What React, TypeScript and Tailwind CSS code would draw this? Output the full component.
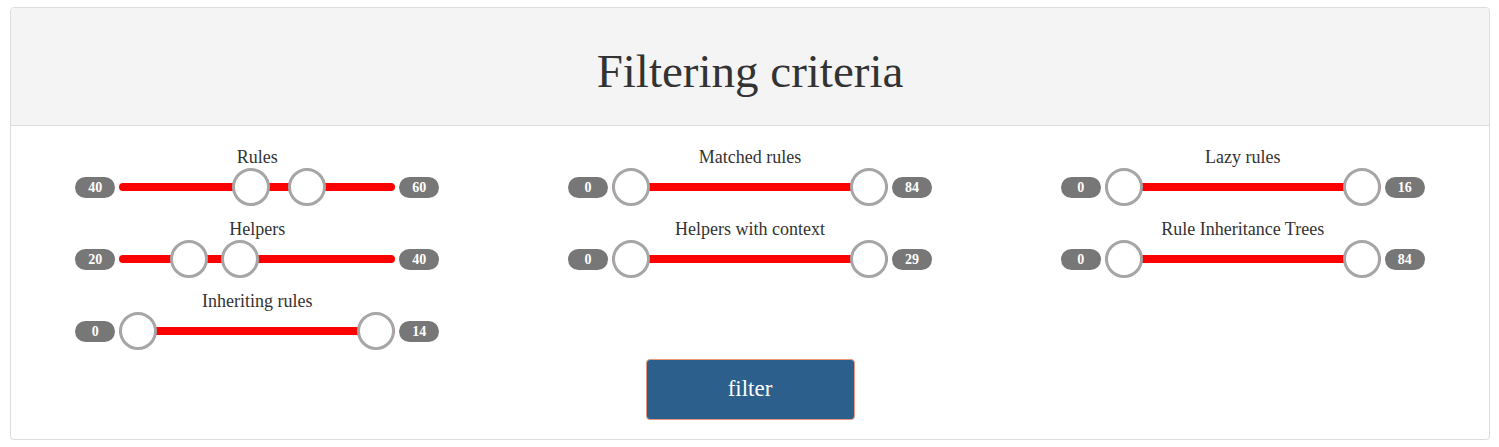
type Crit = {
  label: string;
  min: number;
  max: number;
  lo: number; // thumb left offset in px
  hi: number;
};

const TRACK_W = 276;
const THUMB = 38;
const END = TRACK_W - THUMB;

const columns: Crit[][] = [
  [
    { label: 'Rules', min: 40, max: 60, lo: 113, hi: 169 },
    { label: 'Helpers', min: 20, max: 40, lo: 51, hi: 102 },
    { label: 'Inheriting rules', min: 0, max: 14, lo: 0, hi: END },
  ],
  [
    { label: 'Matched rules', min: 0, max: 84, lo: 0, hi: END },
    { label: 'Helpers with context', min: 0, max: 29, lo: 0, hi: END },
  ],
  [
    { label: 'Lazy rules', min: 0, max: 16, lo: 0, hi: END },
    { label: 'Rule Inheritance Trees', min: 0, max: 84, lo: 0, hi: END },
  ],
];

const Badge = ({ value }: { value: number }) => (
  <div className="w-[40px] h-[21px] rounded-full bg-[#777777] text-white font-bold text-[14px] leading-[21px] text-center">
    {value}
  </div>
);

const RangeSlider = ({ crit }: { crit: Crit }) => (
  <div className="flex flex-col items-center">
    <div className="h-[24px] text-[18px] leading-[24px] text-[#333333]">{crit.label}</div>
    <div className="flex items-center gap-[4px] h-[38px] -mt-[1px]">
      <Badge value={crit.min} />
      <div className="relative w-[276px] h-[38px] flex items-center">
        <div className="w-full h-[8px] rounded-full bg-[#ff0000]" />
        <div
          className="absolute top-0 w-[38px] h-[38px] rounded-full bg-white border-[3px] border-[#a6a6a6]"
          style={{ left: crit.lo }}
        />
        <div
          className="absolute top-0 w-[38px] h-[38px] rounded-full bg-white border-[3px] border-[#a6a6a6]"
          style={{ left: crit.hi }}
        />
      </div>
      <Badge value={crit.max} />
    </div>
  </div>
);

export default function App() {
  return (
    <div className="pt-[7px] pl-[10px] pr-[9px] font-['Liberation_Serif',serif] bg-white">
      <div className="border border-[#dddddd] rounded-[4px] shadow-[0_1px_1px_rgba(0,0,0,0.05)] overflow-hidden">
        <div className="h-[118px] bg-[#f4f4f4] border-b border-[#dddddd] pt-[37px] text-center">
          <h1 className="text-[47px] leading-[53px] text-[#333333]">Filtering criteria</h1>
        </div>
        <div className="pt-[19px] pb-[19px] flex flex-col items-center">
          <div className="grid grid-cols-3 w-full">
            {columns.map((col, i) => (
              <div key={i} className="flex flex-col items-center gap-[11px]">
                {col.map((c) => (
                  <RangeSlider key={c.label} crit={c} />
                ))}
              </div>
            ))}
          </div>
          <button
            type="button"
            className="mt-[9px] w-[209px] h-[61px] rounded-[4px] bg-[#2c5f8c] border border-[#ec9679] text-white text-[23px]"
          >
            filter
          </button>
        </div>
      </div>
    </div>
  );
}
